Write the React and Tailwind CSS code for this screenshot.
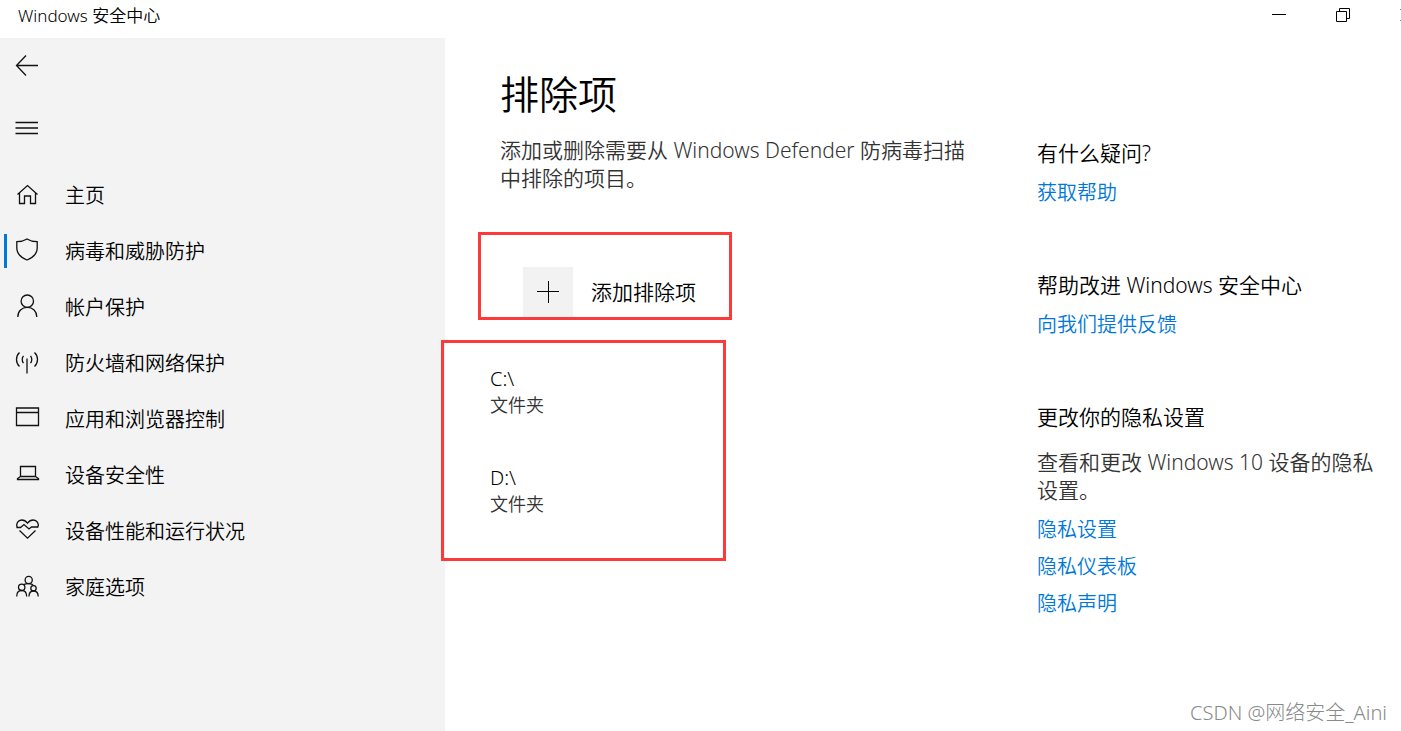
const navItems = [
  { label: '主页', icon: 'home' },
  { label: '病毒和威胁防护', icon: 'shield', active: true },
  { label: '帐户保护', icon: 'account' },
  { label: '防火墙和网络保护', icon: 'network' },
  { label: '应用和浏览器控制', icon: 'browser' },
  { label: '设备安全性', icon: 'device' },
  { label: '设备性能和运行状况', icon: 'health' },
  { label: '家庭选项', icon: 'family' },
];

const exclusions = [
  { path: 'C:\\', type: '文件夹' },
  { path: 'D:\\', type: '文件夹' },
];

const iconShapes = {
  back: <path d="M23 12.5H1.5M11 2.5L1.5 12.5l9.5 10" />,
  menu: <path d="M0.5 6.5h22.5M0.5 12h22.5M0.5 17.5h22.5" />,
  home: <path d="M2.5 11.5L12.5 2.5l10 9M4.5 10v10.5h5v-7.5h6v7.5h5V10" />,
  shield: (
    <path d="M12 0C9.2 1.8 5.5 2.7 1.8 2.7v6.3c0 5.3 4.2 9.5 10.2 12 6-2.5 10.2-6.7 10.2-12V2.7C18.5 2.7 14.8 1.8 12 0z" />
  ),
  account: (
    <>
      <circle cx="12.3" cy="6.2" r="6.2" />
      <path d="M2.8 22c0-5.8 4-9.6 9.5-9.6s9.5 3.8 9.5 9.6" />
    </>
  ),
  network: (
    <path d="M12 7.5v15M8.5 4.8c-1.7 2-1.7 5.4 0 7.4M15.5 4.8c1.7 2 1.7 5.4 0 7.4M4.5 1.5c-4 3.7-4 10.3 0 14M19.5 1.5c4 3.7 4 10.3 0 14" />
  ),
  browser: <path d="M1.5 1h22v17.5h-22zM1.5 5.5h22" />,
  device: <path d="M5.5 3.5h15v10h-15zM5.5 13.5L2.5 15.5v1h21v-1l-3-2" />,
  health: (
    <>
      <path d="M2.3 8.5C0.5 5 3 1 6.8 1c2.5 0 4.2 1.2 5.7 3.2C14 2.2 15.7 1 18.2 1 22 1 24.5 5 22.7 8.5" />
      <path d="M1.5 8.5h4l3.5-3 5 4.5 2.5-2h6.5M4.5 11.5l8 7.7 8-7.7" />
    </>
  ),
  family: (
    <>
      <circle cx="13.7" cy="5" r="3.6" />
      <circle cx="6.7" cy="12.3" r="3.2" />
      <circle cx="18.5" cy="13.3" r="2.7" />
      <path d="M8.8 9.6c1-0.7 2.6-1 4.9-1 2.4 0 4 0.7 4.8 2M1.7 21.5c0-3.6 2-6 5-6s5 2.4 5 6M14 21.5c0-3.3 1.7-5.5 4.5-5.5s4.7 2.2 4.7 5.5" />
    </>
  ),
};

const Icon = ({ name }) => (
  <svg
    className="w-6 h-6 shrink-0 overflow-visible text-[#111]"
    viewBox="0 0 24 24"
    fill="none"
    stroke="currentColor"
    strokeWidth={1.3}
    aria-hidden="true"
  >
    {iconShapes[name]}
  </svg>
);

const TitleBar = () => (
  <header className="flex h-[38px] shrink-0 items-start justify-between overflow-hidden">
    <h1 className="pl-[18px] text-[17px] leading-8">Windows 安全中心</h1>
    <div className="-mr-[38px] flex">
      <button className="flex h-[30px] w-16 items-center justify-center" aria-label="最小化">
        <svg className="h-[14px] w-[14px]" viewBox="0 0 14 14" stroke="currentColor">
          <path d="M0 6.5h14" />
        </svg>
      </button>
      <button className="flex h-[30px] w-16 items-center justify-center" aria-label="还原">
        <svg className="h-[14px] w-[14px]" viewBox="0 0 14 14" fill="none" stroke="currentColor">
          <path d="M0.5 3.5h10v10h-10zM3.5 3.5v-3h10v10h-3" />
        </svg>
      </button>
      <button className="flex h-[30px] w-16 items-center justify-center" aria-label="关闭">
        <svg className="h-[14px] w-[14px]" viewBox="0 0 14 14" stroke="currentColor">
          <path d="M0.5 1l12 12M12.5 1l-12 12" />
        </svg>
      </button>
    </div>
  </header>
);

const Sidebar = () => (
  <aside className="w-[445px] shrink-0 bg-[#f3f3f3]">
    <button className="flex h-[54px] items-center px-[15px]" aria-label="返回">
      <Icon name="back" />
    </button>
    <button className="mb-[3px] flex h-[72px] items-center px-[15px]" aria-label="菜单">
      <Icon name="menu" />
    </button>
    <nav>
      {navItems.map((item) => (
        <a key={item.icon} href="#" className="flex h-14 items-center pl-1">
          <span className={`mr-2 h-[34px] w-[3px] ${item.active ? 'bg-[#0078d7]' : ''}`} />
          <Icon name={item.icon} />
          <span className="ml-[26px] pt-0.5 text-[20px]">{item.label}</span>
        </a>
      ))}
    </nav>
  </aside>
);

const HelpLink = ({ children }) => (
  <a href="#" className="text-[20px] leading-7 text-[#0078d7]">
    {children}
  </a>
);

const HelpPanel = () => (
  <aside className="flex w-[364px] shrink-0 flex-col gap-16 pt-[101px] text-[21px] leading-7">
    <section className="flex flex-col items-start gap-3">
      <h3>有什么疑问?</h3>
      <HelpLink>获取帮助</HelpLink>
    </section>
    <section className="flex flex-col items-start gap-3">
      <h3>帮助改进 Windows 安全中心</h3>
      <HelpLink>向我们提供反馈</HelpLink>
    </section>
    <section>
      <h3>更改你的隐私设置</h3>
      <p className="mt-[17px] max-w-[350px] text-[#333]">查看和更改 Windows 10 设备的隐私设置。</p>
      <div className="mt-3 flex flex-col items-start gap-[9px]">
        <HelpLink>隐私设置</HelpLink>
        <HelpLink>隐私仪表板</HelpLink>
        <HelpLink>隐私声明</HelpLink>
      </div>
    </section>
  </aside>
);

const Exclusions = () => (
  <section className="min-w-0 flex-1 pt-8">
    <div className="ml-[55px]">
      <h2 className="text-[39px] leading-[48px]">排除项</h2>
      <p className="mt-[18px] max-w-[480px] text-[21px] leading-7 text-[#333]">
        添加或删除需要从 Windows Defender 防病毒扫描中排除的项目。
      </p>
    </div>

    <div className="mt-10 ml-[33px] flex h-[88px] w-[254px] items-end border-3 border-[#fc3a3a] pl-[42px]">
      <button className="flex items-center gap-[18px] text-[21px]">
        <span className="flex h-[50px] w-[50px] items-center justify-center bg-[#f2f2f2]">
          <svg className="h-[22px] w-[22px]" viewBox="0 0 22 22" stroke="currentColor">
            <path d="M11.5 0v22M0 10.5h22" />
          </svg>
        </span>
        <span className="pt-0.5">添加排除项</span>
      </button>
    </div>

    <ul className="mt-5 -ml-1 flex h-[221px] w-[285px] flex-col gap-[47px] border-3 border-[#fc3a3a] pt-[23px] pl-[46px]">
      {exclusions.map((item) => (
        <li key={item.path} className="leading-[26px]">
          <div className="text-[20px]">{item.path}</div>
          <div className="text-[18px] text-[#333]">{item.type}</div>
        </li>
      ))}
    </ul>
  </section>
);

export default function App() {
  return (
    <div className="relative flex min-h-screen flex-col overflow-hidden bg-white font-['Noto_Sans','Noto_Sans_CJK_SC',sans-serif] font-[350] text-black">
      <TitleBar />
      <main className="flex flex-1">
        <Sidebar />
        <Exclusions />
        <HelpPanel />
      </main>
      <div className="absolute right-[14px] bottom-1 text-[20px] leading-7 font-light text-[#8a8a8a]">
        CSDN @网络安全_Aini
      </div>
    </div>
  );
}
